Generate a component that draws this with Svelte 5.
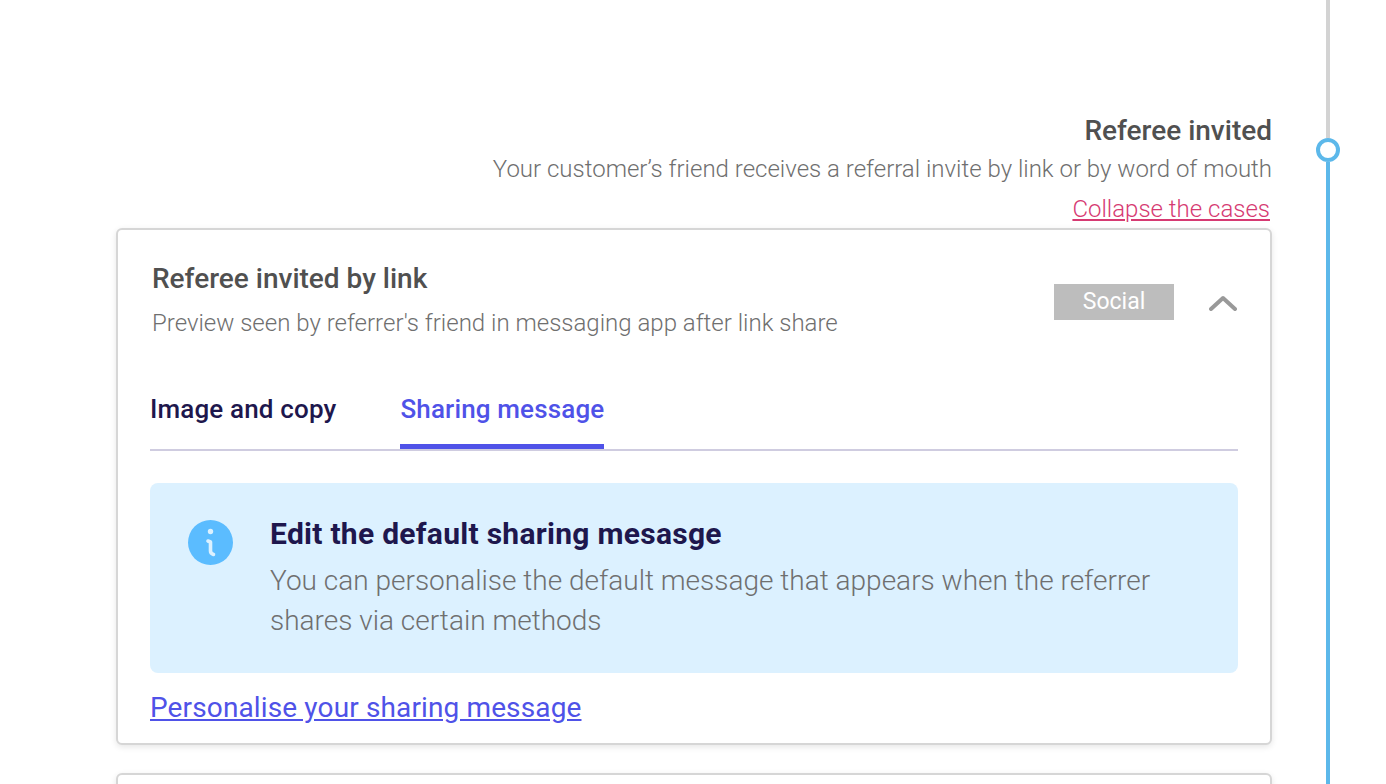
<script lang="ts">
  const tabs = [
    { label: 'Image and copy', active: false },
    { label: 'Sharing message', active: true }
  ];
</script>

<div class="page">
  <main class="content">
    <header class="step-head">
      <h2 class="step-title">Referee invited</h2>
      <p class="step-desc">Your customer’s friend receives a referral invite by link or by word of mouth</p>
      <a class="collapse" href="#cases">Collapse the cases</a>
    </header>

    <section class="card">
      <div class="card-head">
        <div class="card-text">
          <h3 class="card-title">Referee invited by link</h3>
          <p class="card-desc">Preview seen by referrer's friend in messaging app after link share</p>
        </div>
        <span class="badge">Social</span>
        <svg class="chevron" width="28" height="16" viewBox="0 0 28 16" aria-hidden="true">
          <path d="M2 14 L14 3 L26 14" fill="none" stroke="#999" stroke-width="4" stroke-linecap="round" stroke-linejoin="round" />
        </svg>
      </div>

      <div class="tabs">
        {#each tabs as tab}
          <div class="tab" class:active={tab.active}>{tab.label}</div>
        {/each}
      </div>

      <div class="notice">
        <svg class="info" width="45" height="45" viewBox="0 0 45 45" aria-hidden="true">
          <circle cx="22.5" cy="22.5" r="22.5" fill="#5bbcff" />
          <circle cx="22.5" cy="11.5" r="2.7" fill="#dcf1ff" />
          <path d="M20 21 L22.5 22 V31 Q22.5 33.5 25.5 34.5" fill="none" stroke="#dcf1ff" stroke-width="3.6" stroke-linecap="round" stroke-linejoin="round" />
        </svg>
        <div class="notice-text">
          <h4 class="notice-title">Edit the default sharing mesasge</h4>
          <p class="notice-desc">You can personalise the default message that appears when the referrer shares via certain methods</p>
        </div>
      </div>

      <a class="personalise" href="#message">Personalise your sharing message</a>
    </section>

    <section class="card next"></section>
  </main>

  <aside class="timeline">
    <div class="line grey"></div>
    <div class="dot"></div>
    <div class="line blue"></div>
  </aside>
</div>

<style>
  :global(body) {
    margin: 0;
    background: #fff;
  }
  .page {
    display: flex;
    height: 784px;
    overflow: hidden;
    font-family: Roboto, "Liberation Sans", sans-serif;
  }
  .content {
    box-sizing: border-box;
    width: 1272px;
    padding: 115px 0 0 116px;
    flex: none;
  }
  .step-head {
    display: flex;
    flex-direction: column;
    align-items: flex-end;
  }
  .step-title {
    margin: 0;
    font-size: 28px;
    line-height: 32px;
    font-weight: 500;
    color: #505050;
  }
  .step-desc {
    margin: 7px 0 0;
    font-size: 24px;
    line-height: 30px;
    font-weight: 300;
    color: #6f6f6f;
  }
  .collapse {
    margin: 11px 2px 0 0;
    font-size: 24px;
    line-height: 28px;
    font-weight: 300;
    color: #d63a72;
  }
  .card {
    box-sizing: border-box;
    height: 517px;
    margin-top: 5px;
    padding: 0 32px;
    background: #fff;
    border: 2px solid #d6d6d6;
    border-radius: 6px;
    box-shadow: 0 2px 6px rgba(0, 0, 0, 0.1);
  }
  .card.next {
    height: 60px;
    margin-top: 28px;
  }
  .card-head {
    display: flex;
    align-items: center;
    padding: 31px 1px 0 2px;
  }
  .card-text {
    flex: 1;
  }
  .card-title {
    margin: 0;
    font-size: 28px;
    line-height: 36px;
    font-weight: 500;
    color: #505050;
  }
  .card-desc {
    margin: 11px 0 0;
    font-size: 24px;
    line-height: 30px;
    font-weight: 300;
    color: #6f6f6f;
  }
  .badge {
    box-sizing: border-box;
    width: 120px;
    height: 36px;
    margin-top: 4px;
    line-height: 36px;
    text-align: center;
    background: #bdbdbd;
    color: #fff;
    font-size: 23px;
  }
  .chevron {
    margin: 6px 0 0 35px;
    flex: none;
  }
  .tabs {
    display: flex;
    gap: 64px;
    height: 79px;
    margin-top: 34px;
    border-bottom: 2px solid #cfcce0;
    box-sizing: border-box;
  }
  .tab {
    box-sizing: border-box;
    height: 77px;
    padding-top: 21px;
    font-size: 26px;
    line-height: 32px;
    font-weight: 500;
    letter-spacing: 0.15px;
    color: #1e174d;
  }
  .tab.active {
    color: #4f52e8;
    border-bottom: 5px solid #4f52e8;
  }
  .notice {
    display: flex;
    height: 190px;
    margin-top: 32px;
    box-sizing: border-box;
    padding: 31px 36px 0 38px;
    background: #dcf1ff;
    border-radius: 8px;
  }
  .info {
    flex: none;
    margin-top: 6px;
  }
  .notice-text {
    margin-left: 37px;
  }
  .notice-title {
    margin: 0;
    font-size: 30px;
    line-height: 40px;
    font-weight: 700;
    letter-spacing: 0.28px;
    color: #1e174d;
  }
  .notice-desc {
    margin: 7px 0 0;
    font-size: 28px;
    line-height: 40px;
    font-weight: 300;
    color: #6f6f6f;
  }
  .personalise {
    display: block;
    margin-top: 17px;
    font-size: 28px;
    line-height: 36px;
    letter-spacing: 0.13px;
    color: #4f52e8;
  }
  .timeline {
    display: flex;
    flex-direction: column;
    align-items: center;
    width: 24px;
    margin-left: 44px;
    flex: none;
  }
  .line {
    width: 4px;
  }
  .line.grey {
    height: 138px;
    background: #d3d3d3;
  }
  .line.blue {
    flex: 1;
    background: #5cb8ea;
  }
  .dot {
    box-sizing: border-box;
    width: 24px;
    height: 24px;
    flex: none;
    background: #fff;
    border: 4px solid #5cb8ea;
    border-radius: 50%;
  }
</style>
